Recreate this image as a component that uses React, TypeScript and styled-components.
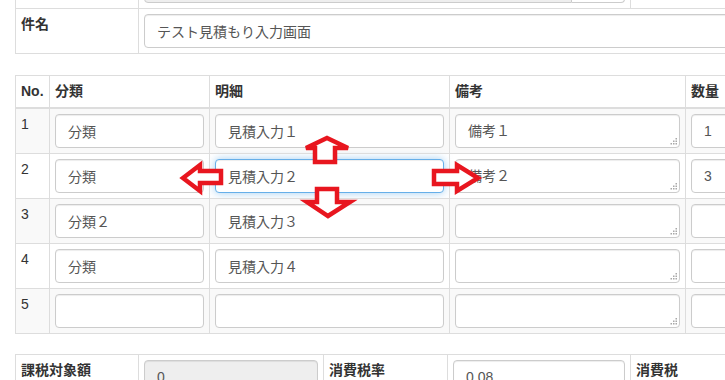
import React from "react"
import styled, { createGlobalStyle } from "styled-components"

const GlobalStyle = createGlobalStyle`
  * { box-sizing: border-box; }
  html, body {
    margin: 0;
    padding: 0;
    background: #fff;
    overflow: hidden;
  }
  body {
    font-family: "Liberation Sans", "Noto Sans CJK JP", sans-serif;
    font-size: 14px;
    line-height: 20px;
    color: #333;
  }
`

interface Row {
  no: number
  cat: string
  detail: string
  note: string
  qty: string
}

const rows: Row[] = [
  { no: 1, cat: "分類", detail: "見積入力１", note: "備考１", qty: "1" },
  { no: 2, cat: "分類", detail: "見積入力２", note: "備考２", qty: "3" },
  { no: 3, cat: "分類２", detail: "見積入力３", note: "", qty: "" },
  { no: 4, cat: "分類", detail: "見積入力４", note: "", qty: "" },
  { no: 5, cat: "", detail: "", note: "", qty: "" },
]

export default function App() {
  return (
    <Page>
      <GlobalStyle />
      <Content>
        {/* header info (scrolled so only the end of the first row shows) */}
        <Table $width={1000} $gap={21}>
          <colgroup>
            <col style={{ width: 123 }} />
            <col style={{ width: 492 }} />
            <col style={{ width: 385 }} />
          </colgroup>
          <tbody>
            <tr>
              <Cell />
              <Cell>
                <InputGroup>
                  <Field disabled defaultValue="" />
                  <Addon />
                </InputGroup>
              </Cell>
              <Cell />
            </tr>
            <tr>
              <Label>件名</Label>
              <Cell colSpan={2}>
                <Field defaultValue="テスト見積もり入力画面" />
              </Cell>
            </tr>
          </tbody>
        </Table>

        <Table $width={1000} $gap={20}>
          <colgroup>
            <col style={{ width: 34 }} />
            <col style={{ width: 160 }} />
            <col style={{ width: 240 }} />
            <col style={{ width: 236 }} />
            <col style={{ width: 160 }} />
            <col style={{ width: 170 }} />
          </colgroup>
          <thead>
            <tr>
              <Head>No.</Head>
              <Head>分類</Head>
              <Head>明細</Head>
              <Head>備考</Head>
              <Head>数量</Head>
              <Head>単価</Head>
            </tr>
          </thead>
          <tbody>
            {rows.map((r) => (
              <Line key={r.no} $striped={r.no % 2 === 1}>
                <Cell>{r.no}</Cell>
                <Cell>
                  <Field defaultValue={r.cat} />
                </Cell>
                <Cell>
                  <Field defaultValue={r.detail} $focus={r.no === 2} />
                </Cell>
                <Cell>
                  <NoteWrap>
                    <Note defaultValue={r.note} />
                    <Grip viewBox="0 0 7 7">
                      <rect x="5.5" y="0" width="1.5" height="1.5" />
                      <rect x="3" y="2.5" width="1.5" height="1.5" />
                      <rect x="5.5" y="2.5" width="1.5" height="1.5" />
                      <rect x="0.5" y="5" width="1.5" height="1.5" />
                      <rect x="3" y="5" width="1.5" height="1.5" />
                      <rect x="5.5" y="5" width="1.5" height="1.5" />
                    </Grip>
                  </NoteWrap>
                </Cell>
                <Cell>
                  <Field defaultValue={r.qty} />
                </Cell>
                <Cell>
                  <Field defaultValue="" />
                </Cell>
              </Line>
            ))}
          </tbody>
        </Table>

        <Table $width={1000} $gap={20}>
          <colgroup>
            <col style={{ width: 123 }} />
            <col style={{ width: 185 }} />
            <col style={{ width: 124 }} />
            <col style={{ width: 183 }} />
            <col style={{ width: 124 }} />
            <col style={{ width: 261 }} />
          </colgroup>
          <tbody>
            <tr>
              <Label>課税対象額</Label>
              <Cell>
                <Field disabled defaultValue="0" />
              </Cell>
              <Label>消費税率</Label>
              <Cell>
                <Field defaultValue="0.08" />
              </Cell>
              <Label>消費税</Label>
              <Cell>
                <Field disabled defaultValue="0" />
              </Cell>
            </tr>
          </tbody>
        </Table>
      </Content>

      {/* red block arrows drawn over the screenshot */}
      <Annotation viewBox="0 0 725 380">
        <Arrow points="183,178 200,165 200,171 221,171 221,183 200,183 200,191" />
        <Arrow points="434,171 457,171 457,165 478,178 457,191 457,184 434,184" />
        <Arrow points="327,138 348,148 335,148 335,162 315,162 315,148 306,148" />
        <Arrow points="317,189 337,189 337,202 350,202 328,216 307,202 317,202" />
      </Annotation>
    </Page>
  )
}

const Page = styled.div`
  position: relative;
  width: 725px;
  height: 380px;
  overflow: hidden;
`

const Content = styled.div`
  margin-top: -37px;
  padding-left: 15px;
`

const Table = styled.table<{ $width: number; $gap: number }>`
  width: ${(p) => p.$width}px;
  border-collapse: collapse;
  border-spacing: 0;
  table-layout: fixed;
  margin-bottom: ${(p) => p.$gap}px;
`

const Cell = styled.td`
  border: 1px solid #ddd;
  padding: 5px;
  vertical-align: top;
  text-align: left;
`

const Label = styled(Cell)`
  font-weight: bold;
`

const Head = styled.th`
  border: 1px solid #ddd;
  border-bottom: 2px solid #ddd;
  padding: 5px 5px 6px;
  vertical-align: bottom;
  text-align: left;
  font-weight: bold;
  white-space: nowrap;
`

const Line = styled.tr<{ $striped: boolean }>`
  background: ${(p) => (p.$striped ? "#f9f9f9" : "#fff")};
`

const Field = styled.input<{ $focus?: boolean }>`
  display: block;
  width: 100%;
  height: 34px;
  padding: 6px 12px;
  font: inherit;
  font-size: 14px;
  color: #555;
  background: #fff;
  border: 1px solid ${(p) => (p.$focus ? "#66afe9" : "#ccc")};
  border-radius: 4px;
  box-shadow: ${(p) =>
    p.$focus
      ? "inset 0 1px 1px rgba(0,0,0,.075), 0 0 8px rgba(102,175,233,.6)"
      : "inset 0 1px 1px rgba(0,0,0,.075)"};
  outline: none;

  &:disabled {
    background: #eee;
  }
`

const NoteWrap = styled.div`
  position: relative;
`

const Note = styled.textarea`
  display: block;
  width: 100%;
  height: 34px;
  padding: 6px 12px;
  font: inherit;
  font-size: 14px;
  color: #555;
  background: #fff;
  border: 1px solid #ccc;
  border-radius: 4px;
  box-shadow: inset 0 1px 1px rgba(0, 0, 0, 0.075);
  resize: none;
  overflow: hidden;
  outline: none;
`

const Grip = styled.svg`
  position: absolute;
  right: 3px;
  bottom: 3px;
  width: 7px;
  height: 7px;
  fill: #a8a8a8;
`

const InputGroup = styled.div`
  display: flex;

  & > input {
    border-radius: 4px 0 0 4px;
  }
`

const Addon = styled.span`
  width: 53px;
  height: 34px;
  flex: none;
  border: 1px solid #ccc;
  border-left: none;
  border-radius: 0 4px 4px 0;
  background: #fff;
`

const Annotation = styled.svg`
  position: absolute;
  top: 0;
  left: 0;
  width: 725px;
  height: 380px;
  pointer-events: none;
`

const Arrow = styled.polygon`
  fill: #fff;
  stroke: #e8161f;
  stroke-width: 4.5;
  stroke-linejoin: miter;
`
